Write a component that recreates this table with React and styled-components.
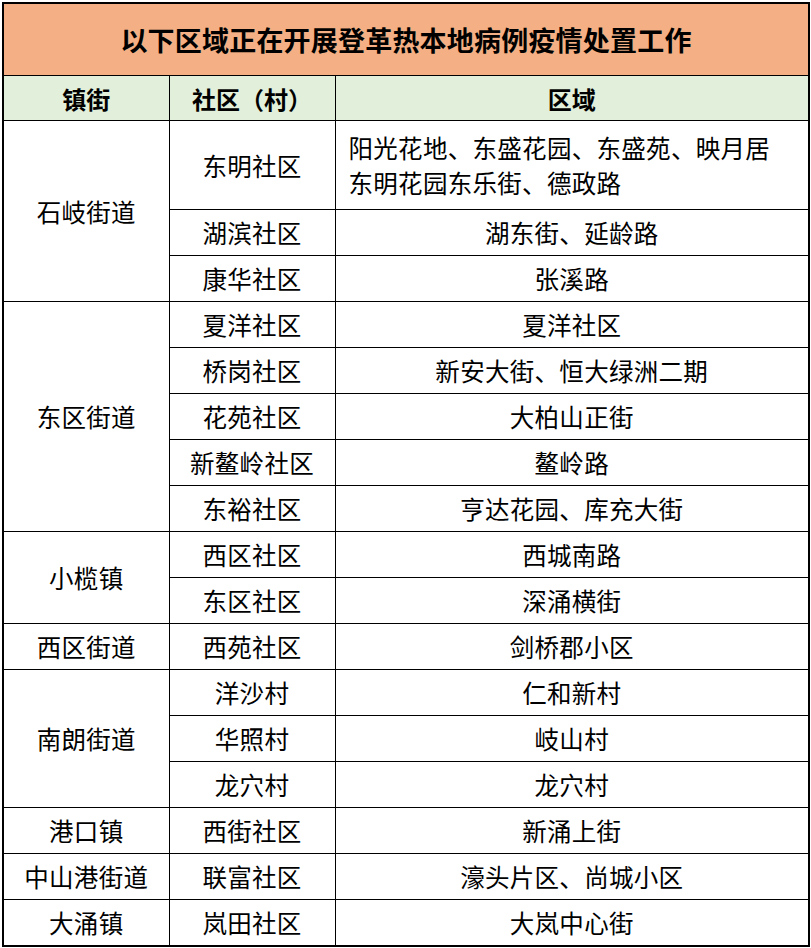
import React from 'react';
import styled, { createGlobalStyle } from 'styled-components';

const GlobalStyle = createGlobalStyle`
  html, body {
    margin: 0;
    padding: 0;
    background: #ffffff;
  }
  body {
    font-family: "Noto Sans CJK SC", "Noto Sans", sans-serif;
    color: #000000;
  }
`;

const Page = styled.div`
  padding: 2px 0 0 2px;
  width: 811px;
  box-sizing: border-box;
`;

const Table = styled.table`
  width: 806px;
  border-collapse: collapse;
  table-layout: fixed;
  border: 2px solid #000;
`;

const TitleCell = styled.th`
  height: 71px;
  background: #f4b084;
  font-size: 27px;
  font-weight: 700;
  text-align: center;
  vertical-align: middle;
  border: 1px solid #000;
  padding: 0;
  letter-spacing: 0.2px;
`;

const HeadCell = styled.th`
  height: 44px;
  background: #e2efda;
  font-size: 24px;
  font-weight: 700;
  text-align: center;
  border: 1px solid #000;
  padding: 0;
`;

const Cell = styled.td`
  height: ${(p) => p.$h || 45}px;
  font-size: 24.5px;
  letter-spacing: 0.3px;
  line-height: 35px;
  text-align: ${(p) => (p.$left ? 'left' : 'center')};
  padding: ${(p) => (p.$left ? '0 8px 0 13px' : '0')};
  border: 1px solid #000;
  vertical-align: middle;
  white-space: nowrap;
`;

const groups = [
  {
    town: '石岐街道',
    rows: [
      { c: '东明社区', a: ['阳光花地、东盛花园、东盛苑、映月居', '东明花园东乐街、德政路'] },
      { c: '湖滨社区', a: '湖东街、延龄路' },
      { c: '康华社区', a: '张溪路' },
    ],
  },
  {
    town: '东区街道',
    rows: [
      { c: '夏洋社区', a: '夏洋社区' },
      { c: '桥岗社区', a: '新安大街、恒大绿洲二期' },
      { c: '花苑社区', a: '大柏山正街' },
      { c: '新鳌岭社区', a: '鳌岭路' },
      { c: '东裕社区', a: '亨达花园、库充大街' },
    ],
  },
  {
    town: '小榄镇',
    rows: [
      { c: '西区社区', a: '西城南路' },
      { c: '东区社区', a: '深涌横街' },
    ],
  },
  { town: '西区街道', rows: [{ c: '西苑社区', a: '剑桥郡小区' }] },
  {
    town: '南朗街道',
    rows: [
      { c: '洋沙村', a: '仁和新村' },
      { c: '华照村', a: '岐山村' },
      { c: '龙穴村', a: '龙穴村' },
    ],
  },
  { town: '港口镇', rows: [{ c: '西街社区', a: '新涌上街' }] },
  { town: '中山港街道', rows: [{ c: '联富社区', a: '濠头片区、尚城小区' }] },
  { town: '大涌镇', rows: [{ c: '岚田社区', a: '大岚中心街' }] },
];

export default function App() {
  return (
    <Page>
      <GlobalStyle />
      <Table>
        <colgroup>
          <col style={{ width: 166 }} />
          <col style={{ width: 166 }} />
          <col style={{ width: 474 }} />
        </colgroup>
        <thead>
          <tr>
            <TitleCell colSpan={3}>以下区域正在开展登革热本地病例疫情处置工作</TitleCell>
          </tr>
          <tr>
            <HeadCell>镇街</HeadCell>
            <HeadCell>社区（村）</HeadCell>
            <HeadCell>区域</HeadCell>
          </tr>
        </thead>
        <tbody>
          {groups.map((g) =>
            g.rows.map((r, i) => {
              const multi = Array.isArray(r.a);
              return (
                <tr key={g.town + r.c}>
                  {i === 0 && <Cell rowSpan={g.rows.length}>{g.town}</Cell>}
                  <Cell $h={multi ? 88 : 45}>{r.c}</Cell>
                  <Cell $h={multi ? 88 : 45} $left={multi}>
                    {multi
                      ? r.a.map((line) => <div key={line}>{line}</div>)
                      : r.a}
                  </Cell>
                </tr>
              );
            })
          )}
        </tbody>
      </Table>
    </Page>
  );
}
